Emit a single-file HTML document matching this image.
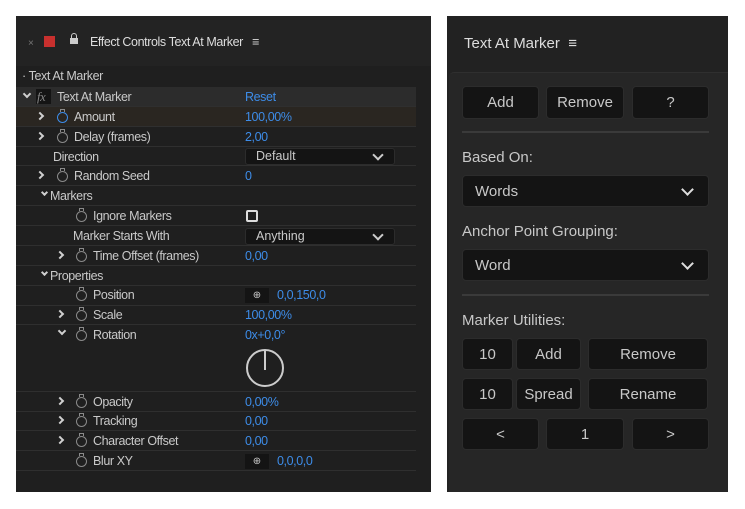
<!DOCTYPE html>
<html><head><meta charset="utf-8"><style>
*{margin:0;padding:0;box-sizing:border-box}
body{width:745px;height:509px;background:#fff;position:relative;overflow:hidden;font-family:"Liberation Sans",sans-serif}
.L{position:absolute;left:16px;top:16px;width:415px;height:476px;background:#1f1f1f}
.lh{position:absolute;left:0;top:0;width:415px;height:50px;background:#232323}
.t{position:absolute;color:#c9c9c9;font-size:12.5px;letter-spacing:-0.4px;white-space:nowrap;line-height:14px}
.b{color:#3d8ce8}
.row{position:absolute;left:0;width:400px;height:20px;border-bottom:1px solid #2f2f2f}
.sw{position:absolute;width:11px;height:11px;border:1.5px solid #8a8a8a;border-radius:50%}
.sw:after{content:"";position:absolute;left:2px;top:-4px;width:3px;height:2px;border:1px solid #8a8a8a;border-bottom:none}
.dd{position:absolute;left:229px;width:150px;height:17px;background:#141414;border:1px solid #2c2c2c;border-radius:3px;color:#c9c9c9;font-size:12.5px;padding-left:10px;line-height:15px}
.dd:after{content:"";position:absolute;right:12px;top:2px;width:6px;height:6px;border-right:2px solid #ccc;border-bottom:2px solid #ccc;transform:rotate(45deg)}
.chev{position:absolute;width:6px;height:6px;border-right:2.5px solid #d0d0d0;border-bottom:2.5px solid #d0d0d0}
.R{position:absolute;left:447px;top:16px;width:281px;height:476px;background:#222}
.rb{position:absolute;left:2px;top:56px;width:279px;height:420px;background:#262626;border-top-left-radius:5px;border-top:1px solid #2f2f2f}
.btn{position:absolute;background:#141414;border:1px solid #2c2c2c;border-radius:4px;color:#c8c8c8;font-size:15px;text-align:center;line-height:31px}
.lbl{position:absolute;color:#c8c8c8;font-size:15px;white-space:nowrap}
.sep{position:absolute;left:462px;width:247px;height:2px;background:#3a3a3a}
.rdd{position:absolute;left:462px;width:247px;height:32px;background:#141414;border:1px solid #2c2c2c;border-radius:4px;color:#c8c8c8;font-size:15px;padding-left:12px;line-height:32px}
.rdd:after{content:"";position:absolute;right:16px;top:9px;width:7px;height:7px;border-right:2.5px solid #ddd;border-bottom:2.5px solid #ddd;transform:rotate(45deg)}
</style></head><body>
<div class="L">
<div class="lh"></div>
<div class="t" style="left:12px;top:21px;color:#777;font-size:10px">×</div>
<div style="position:absolute;left:28px;top:20px;width:11px;height:11px;background:#c8302e"></div>
<div style="position:absolute;left:54px;top:22px;width:8px;height:6px;background:#ccc"></div>
<div style="position:absolute;left:55px;top:17px;width:6px;height:6px;border:1.5px solid #ccc;border-bottom:none;border-radius:3px 3px 0 0"></div>
<div class="t" style="left:74px;top:19px;color:#ddd">Effect Controls Text At Marker &nbsp;&nbsp;≡</div>
<div class="t" style="left:6px;top:53px">· Text At Marker</div>
<div class="row" style="top:71px;background:#2c2c2c;width:400px"></div>
<div class="row" style="top:91px;background:#2a2621"></div>
<div class="row" style="top:111px"></div><div class="row" style="top:130px"></div><div class="row" style="top:150px"></div><div class="row" style="top:170px"></div><div class="row" style="top:190px"></div><div class="row" style="top:210px"></div><div class="row" style="top:230px"></div><div class="row" style="top:250px"></div><div class="row" style="top:270px"></div><div class="row" style="top:289px"></div>
<div class="row" style="top:309px;height:67px"></div>
<div class="row" style="top:376px"></div><div class="row" style="top:395px"></div><div class="row" style="top:415px"></div><div class="row" style="top:435px"></div>
<div class="chev" style="left:8px;top:75px;transform:rotate(45deg)"></div>
<div style="position:absolute;left:20px;top:73px;width:15px;height:15px;background:#141414"></div>
<div class="t" style="left:21px;top:74px;color:#888;font-style:italic;font-family:'Liberation Serif',serif">fx</div>
<div class="t" style="left:41px;top:74px">Text At Marker</div><div class="t b" style="left:229px;top:74px">Reset</div>
<div class="chev" style="left:21px;top:97px;transform:rotate(-45deg)"></div>
<div class="sw" style="left:41px;top:96px;border-color:#3d8ce8"></div>
<div class="t" style="left:58px;top:94px">Amount</div><div class="t b" style="left:229px;top:94px">100,00%</div>
<div class="chev" style="left:21px;top:117px;transform:rotate(-45deg)"></div><div class="sw" style="left:41px;top:116px"></div>
<div class="t" style="left:58px;top:114px">Delay (frames)</div><div class="t b" style="left:229px;top:114px">2,00</div>
<div class="t" style="left:37px;top:134px">Direction</div><div class="dd" style="top:132px">Default</div>
<div class="chev" style="left:21px;top:156px;transform:rotate(-45deg)"></div><div class="sw" style="left:41px;top:155px"></div>
<div class="t" style="left:58px;top:153px">Random Seed</div><div class="t b" style="left:229px;top:153px">0</div>
<div class="chev" style="left:26px;top:174px;transform:rotate(45deg);width:5px;height:5px;border-width:2px"></div>
<div class="t" style="left:34px;top:173px">Markers</div>
<div class="sw" style="left:60px;top:195px"></div><div class="t" style="left:77px;top:193px">Ignore Markers</div>
<div style="position:absolute;left:230px;top:194px;width:12px;height:12px;border:2px solid #ddd;border-radius:2px"></div>
<div class="t" style="left:57px;top:213px">Marker Starts With</div><div class="dd" style="top:212px">Anything</div>
<div class="chev" style="left:41px;top:236px;transform:rotate(-45deg)"></div><div class="sw" style="left:60px;top:235px"></div>
<div class="t" style="left:77px;top:233px">Time Offset (frames)</div><div class="t b" style="left:229px;top:233px">0,00</div>
<div class="chev" style="left:26px;top:254px;transform:rotate(45deg);width:5px;height:5px;border-width:2px"></div>
<div class="t" style="left:34px;top:253px">Properties</div>
<div class="sw" style="left:60px;top:274px"></div><div class="t" style="left:77px;top:272px">Position</div>
<div style="position:absolute;left:229px;top:272px;width:24px;height:15px;background:#141414;color:#ccc;font-size:10px;text-align:center;line-height:15px">⊕</div>
<div class="t b" style="left:261px;top:272px">0,0,150,0</div>
<div class="chev" style="left:41px;top:295px;transform:rotate(-45deg)"></div><div class="sw" style="left:60px;top:294px"></div>
<div class="t" style="left:77px;top:292px">Scale</div><div class="t b" style="left:229px;top:292px">100,00%</div>
<div class="chev" style="left:43px;top:312px;transform:rotate(45deg)"></div><div class="sw" style="left:60px;top:314px"></div>
<div class="t" style="left:77px;top:312px">Rotation</div><div class="t b" style="left:229px;top:312px">0x+0,0°</div>
<div style="position:absolute;left:230px;top:333px;width:38px;height:38px;border:2px solid #ccc;border-radius:50%"></div>
<div style="position:absolute;left:248px;top:335px;width:2px;height:19px;background:#ccc"></div>
<div class="chev" style="left:41px;top:382px;transform:rotate(-45deg)"></div><div class="sw" style="left:60px;top:381px"></div>
<div class="t" style="left:77px;top:379px">Opacity</div><div class="t b" style="left:229px;top:379px">0,00%</div>
<div class="chev" style="left:41px;top:401px;transform:rotate(-45deg)"></div><div class="sw" style="left:60px;top:400px"></div>
<div class="t" style="left:77px;top:398px">Tracking</div><div class="t b" style="left:229px;top:398px">0,00</div>
<div class="chev" style="left:41px;top:421px;transform:rotate(-45deg)"></div><div class="sw" style="left:60px;top:420px"></div>
<div class="t" style="left:77px;top:418px">Character Offset</div><div class="t b" style="left:229px;top:418px">0,00</div>
<div class="sw" style="left:60px;top:440px"></div><div class="t" style="left:77px;top:438px">Blur XY</div>
<div style="position:absolute;left:229px;top:438px;width:24px;height:15px;background:#141414;color:#ccc;font-size:10px;text-align:center;line-height:15px">⊕</div>
<div class="t b" style="left:261px;top:438px">0,0,0,0</div>
</div>
<div class="R"><div class="rb"></div>
<div class="lbl" style="left:17px;top:19px;color:#ddd">Text At Marker &nbsp;≡</div></div>
<div class="btn" style="left:462px;top:86px;width:77px;height:33px">Add</div>
<div class="btn" style="left:546px;top:86px;width:78px;height:33px">Remove</div>
<div class="btn" style="left:632px;top:86px;width:77px;height:33px">?</div>
<div class="sep" style="top:131px"></div>
<div class="lbl" style="left:462px;top:149px">Based On:</div>
<div class="rdd" style="top:175px">Words</div>
<div class="lbl" style="left:462px;top:223px">Anchor Point Grouping:</div>
<div class="rdd" style="top:249px">Word</div>
<div class="sep" style="top:294px"></div>
<div class="lbl" style="left:462px;top:312px">Marker Utilities:</div>
<div class="btn" style="left:462px;top:338px;width:51px;height:32px">10</div>
<div class="btn" style="left:516px;top:338px;width:65px;height:32px">Add</div>
<div class="btn" style="left:588px;top:338px;width:120px;height:32px">Remove</div>
<div class="btn" style="left:462px;top:378px;width:51px;height:32px">10</div>
<div class="btn" style="left:516px;top:378px;width:65px;height:32px">Spread</div>
<div class="btn" style="left:588px;top:378px;width:120px;height:32px">Rename</div>
<div class="btn" style="left:462px;top:418px;width:77px;height:32px">&lt;</div>
<div class="btn" style="left:546px;top:418px;width:78px;height:32px">1</div>
<div class="btn" style="left:632px;top:418px;width:77px;height:32px">&gt;</div>
</body></html>
